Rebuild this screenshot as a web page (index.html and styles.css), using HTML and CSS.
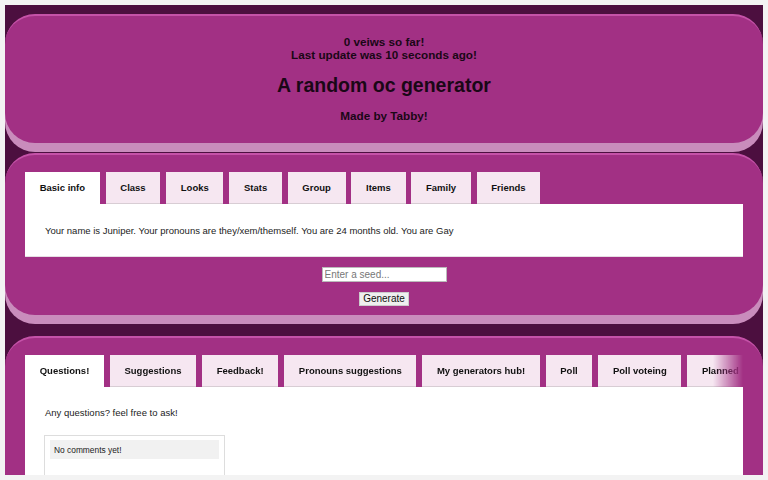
FILE: index.html
```html
<!DOCTYPE html>
<html>
<head>
<meta charset="utf-8">
<link rel="stylesheet" href="styles.css">
</head>
<body>
<div class="frame">
  <section class="card card-head">
    <p class="stat">0 veiws so far!<br>Last update was 10 seconds ago!</p>
    <h1 class="title">A random oc generator</h1>
    <p class="byline">Made by Tabby!</p>
  </section>

  <section class="card card-gen">
    <div class="tabs">
      <div class="tab active">Basic info</div>
      <div class="tab">Class</div>
      <div class="tab">Looks</div>
      <div class="tab">Stats</div>
      <div class="tab">Group</div>
      <div class="tab">Items</div>
      <div class="tab">Family</div>
      <div class="tab">Friends</div>
    </div>
    <div class="panel panel-gen">
      <p class="info">Your name is Juniper. Your pronouns are they/xem/themself. You are 24 months old. You are Gay</p>
    </div>
    <div class="controls">
      <input class="seed" type="text" placeholder="Enter a seed...">
      <button class="gen-btn">Generate</button>
    </div>
  </section>

  <section class="card card-q">
    <div class="tabs tabs-fade">
      <div class="tab active">Questions!</div>
      <div class="tab">Suggestions</div>
      <div class="tab">Feedback!</div>
      <div class="tab">Pronouns suggestions</div>
      <div class="tab">My generators hub!</div>
      <div class="tab">Poll</div>
      <div class="tab">Poll voteing</div>
      <div class="tab">Planned</div>
    </div>
    <div class="panel panel-q">
      <p class="info">Any questions? feel free to ask!</p>
      <div class="comments">
        <div class="comment-empty">No comments yet!</div>
      </div>
    </div>
  </section>
</div>
</body>
</html>
```

FILE: styles.css
```css
html {
  background: #f3f3f3;
}
body {
  margin: 5px;
  font-family: "Liberation Sans", Arial, sans-serif;
  color: #111;
}
.frame {
  width: 758px;
  height: 470px;
  overflow: hidden;
  background: #4c0f3f;
  padding-top: 9px;
  box-sizing: border-box;
}
.card {
  background: #a23084;
  border-top: 2px solid #c552a8;
  border-radius: 30px;
  box-shadow: 0 9px 0 #c98cbc;
  box-sizing: border-box;
}
.card-head {
  height: 129px;
  text-align: center;
  padding-top: 19px;
  margin-bottom: 10px;
}
.stat {
  margin: 0;
  font-size: 11.7px;
  font-weight: bold;
  line-height: 13px;
  color: #1a0716;
}
.title {
  margin: 12px 0 0;
  font-size: 19.5px;
  line-height: 24px;
  color: #1a0716;
}
.byline {
  margin: 12px 0 0;
  font-size: 11.7px;
  font-weight: bold;
  line-height: 14px;
  color: #1a0716;
}
.card-gen {
  height: 162px;
  padding: 17px 20px 0;
  margin-bottom: 21px;
}
.tabs {
  display: flex;
  gap: 5.8px;
  height: 32px;
}
.tab {
  flex: none;
  background: #f6e7f1;
  border-bottom: 1px solid #d8cdd4;
  box-sizing: border-box;
  height: 32px;
  padding: 0 14.7px;
  font-size: 9.5px;
  font-weight: bold;
  line-height: 32px;
  color: #111;
  white-space: nowrap;
}
.tab.active {
  background: #fff;
  border-bottom: none;
}
.panel {
  background: #fff;
  border-bottom: 1px solid #e6dde3;
}
.panel-gen {
  height: 53px;
  box-sizing: border-box;
  padding-top: 21px;
}
.info {
  margin: 0 0 0 20px;
  font-size: 9.5px;
  line-height: 12px;
  color: #222;
}
.controls {
  display: flex;
  flex-direction: column;
  align-items: center;
  padding-top: 10px;
  gap: 10px;
}
.seed {
  width: 125px;
  height: 15px;
  box-sizing: border-box;
  border: 1px solid #bbb;
  padding: 0 2px;
  font-family: "Liberation Sans", Arial, sans-serif;
  font-size: 10px;
  background: #fff;
  margin: 0;
}
.seed::placeholder {
  color: #777;
}
.gen-btn {
  height: 14px;
  padding: 0 3px;
  border: 1px solid #ccc;
  background: #efefef;
  font-family: "Liberation Sans", Arial, sans-serif;
  font-size: 10px;
  line-height: 12px;
  color: #111;
  margin: 0;
}
.card-q {
  height: 300px;
  padding: 17px 20px 0;
  border-bottom-left-radius: 0;
  border-bottom-right-radius: 0;
}
.tabs-fade {
  overflow: hidden;
  -webkit-mask-image: linear-gradient(to right, #000 calc(100% - 30px), transparent);
  mask-image: linear-gradient(to right, #000 calc(100% - 30px), transparent);
}
.panel-q {
  height: 200px;
  padding-top: 20px;
  box-sizing: border-box;
}
.comments {
  margin: 16px 0 0 19px;
  width: 181px;
  height: 60px;
  border: 1px solid #ddd;
  box-sizing: border-box;
  padding: 4px 5px;
}
.comment-empty {
  background: #f1f1f1;
  height: 19px;
  line-height: 20px;
  padding-left: 4px;
  font-size: 8.4px;
  color: #222;
}
```
